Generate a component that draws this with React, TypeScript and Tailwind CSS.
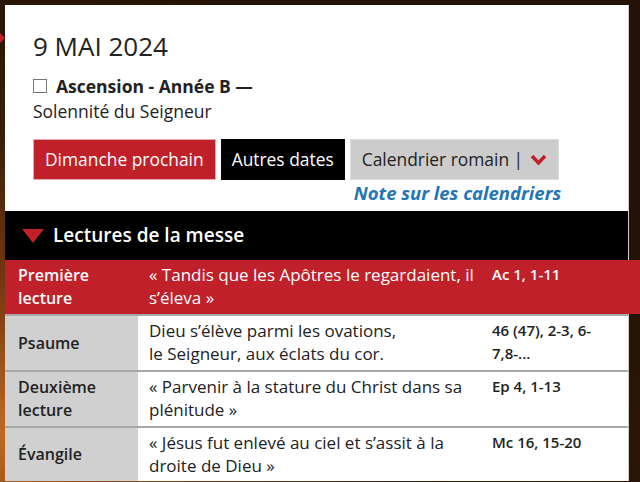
const readings = [
  {
    label: ["Première", "lecture"],
    text: "« Tandis que les Apôtres le regardaient, il s’éleva »",
    ref: "Ac 1, 1-11",
    active: true,
  },
  {
    label: ["Psaume"],
    text: "Dieu s’élève parmi les ovations,\nle Seigneur, aux éclats du cor.\nou : Alléluia ! (Ps 46, 6a)",
    ref: "46 (47), 2-3, 6-7,8-...",
    clip: true,
  },
  {
    label: ["Deuxième", "lecture"],
    text: "« Parvenir à la stature du Christ dans sa plénitude »",
    ref: "Ep 4, 1-13",
  },
  {
    label: ["Évangile"],
    text: "« Jésus fut enlevé au ciel et s’assit à la droite de Dieu »",
    ref: "Mc 16, 15-20",
  },
]

export default function App() {
  return (
    <div className="relative h-[482px] overflow-hidden bg-[radial-gradient(ellipse_at_0%_90%,#c06a22_0%,#7a3c12_22%,#3a1f0a_48%,#241306_75%)] pl-[5px] pt-[5px] font-['Open_Sans',sans-serif] text-[#222]">
      <div className="absolute left-0 top-[33px] h-0 w-0 border-y-[5px] border-l-[5px] border-y-transparent border-l-[#c0202a]" />
      <div className="w-[624px] border-r border-[#ccc] bg-white">
        <div className="pl-[28px] pt-[23px]">
          <h1 className="text-[26px] leading-[36px]">9 MAI 2024</h1>
          <div className="mt-[10px] flex items-center text-[17.5px] leading-[24px]">
            <span className="mr-[9px] inline-block h-[14px] w-[14px] border border-[#777]" />
            <span className="font-bold">Ascension - Année B —</span>
          </div>
          <div className="mt-[1px] text-[17.5px] leading-[25px]">Solennité du Seigneur</div>
          <div className="mt-[15px] inline-flex flex-col items-end">
            <div className="flex gap-[5px] text-[17.4px]">
              <button className="h-[41px] border border-[#e7a9ad] bg-[#c0202a] px-[11px] text-white">Dimanche prochain</button>
              <button className="h-[41px] bg-black px-[11px] text-white">Autres dates</button>
              <button className="flex h-[41px] items-center border border-[#ddd] bg-[#cccccc] px-[11px] text-[#222]">
                Calendrier romain |
                <svg className="ml-[7px]" width="17" height="12" viewBox="0 0 17 12">
                  <polyline points="2,2 8.5,9 15,2" fill="none" stroke="#c0202a" strokeWidth="3.5" />
                </svg>
              </button>
            </div>
            <a className="mr-[-2px] mt-[1px] text-[18.5px] font-bold italic leading-[24px] text-[#2574b4]">Note sur les calendriers</a>
          </div>
        </div>

        <div className="mt-[6px] flex h-[49px] items-center bg-black pl-[17px] text-white">
          <svg width="22" height="14" viewBox="0 0 22 14">
            <polygon points="0,0 22,0 11,14" fill="#c0202a" />
          </svg>
          <span className="ml-[9px] text-[19px] font-semibold">Lectures de la messe</span>
        </div>

        <div className="leading-[23px]">
          {readings.map((r, i) => (
            <div
              key={i}
              className={
                r.active
                  ? "mr-[-12px] grid grid-cols-[133px_342px_160px] bg-[#c0202a] text-white"
                  : "grid grid-cols-[133px_342px_148px] border-t-2 border-[#a8a8a8] " +
                    (r.clip ? "h-[56px] grid-rows-[minmax(0,1fr)] overflow-hidden" : "")
              }
            >
              <div className={"flex items-center px-[13px] py-[4px] text-[16px] font-semibold " + (r.active ? "" : "bg-[#d0d0d0]")}>
                <div>
                  {r.label.map((l, j) => (
                    <div key={j}>{l}</div>
                  ))}
                </div>
              </div>
              <div className="overflow-hidden whitespace-pre-line pb-[4px] pl-[11px] pr-[4px] pt-[3px] text-[17px]">{r.text}</div>
              <div className="pb-[4px] pl-[12px] pr-[12px] pt-[3px] text-[15px] font-semibold">{r.ref}</div>
            </div>
          ))}
        </div>
      </div>
    </div>
  )
}
